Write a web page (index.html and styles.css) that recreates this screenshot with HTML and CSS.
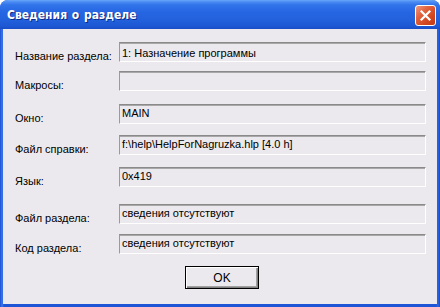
FILE: index.html
```html
<!DOCTYPE html>
<html lang="ru">
<head>
<meta charset="utf-8">
<title>Сведения о разделе</title>
<link rel="stylesheet" href="styles.css">
</head>
<body>
<div class="window">
  <div class="titlebar">
    <span class="title">Сведения о разделе</span>
    <button class="close" aria-label="Закрыть">
      <svg width="11" height="11" viewBox="0 0 11 11"><path d="M1.5 1.5 L9.5 9.5 M9.5 1.5 L1.5 9.5" stroke="#fff" stroke-width="2.2" stroke-linecap="square"/></svg>
    </button>
  </div>
  <div class="client">
    <div class="row first">
      <span class="label">Название раздела:</span>
      <div class="field field-first">1: Назначение программы</div>
    </div>
    <div class="row g9">
      <span class="label">Макросы:</span>
      <div class="field"></div>
    </div>
    <div class="row g13">
      <span class="label">Окно:</span>
      <div class="field">MAIN</div>
    </div>
    <div class="row g11">
      <span class="label">Файл справки:</span>
      <div class="field">f:\help\HelpForNagruzka.hlp [4.0 h]</div>
    </div>
    <div class="row g12">
      <span class="label">Язык:</span>
      <div class="field">0x419</div>
    </div>
    <div class="row g17">
      <span class="label">Файл раздела:</span>
      <div class="field">сведения отсутствуют</div>
    </div>
    <div class="row g10">
      <span class="label">Код раздела:</span>
      <div class="field">сведения отсутствуют</div>
    </div>
    <div class="buttons">
      <button class="ok">OK</button>
    </div>
  </div>
</div>
</body>
</html>
```
FILE: styles.css
```css
html, body {
  margin: 0;
  padding: 0;
  background: #ffffff;
}
.window {
  width: 440px;
  height: 307px;
  box-sizing: border-box;
  background: linear-gradient(to right, #1e4fd0 0, #3a76ee 2px, #1e55d6 4px, #1e55d6 436px, #2d66e4 438px, #1a47c0 440px);
  border-radius: 8px 8px 0 0;
  display: flex;
  flex-direction: column;
  font-family: "Liberation Sans", Arial, sans-serif;
  font-size: 11px;
  color: #000;
}
.titlebar {
  height: 29px;
  flex: none;
  display: flex;
  align-items: center;
  justify-content: space-between;
  padding: 0 4px 0 7px;
  border-radius: 8px 8px 0 0;
  background: linear-gradient(to bottom, #6aa6f8 0px, #4a8af2 2px, #3074ea 5px, #2766e2 12px, #2260dc 20px, #1e58d4 26px, #1a4cc6 29px);
}
.title {
  color: #fff;
  font-family: "DejaVu Sans Condensed", "Liberation Sans Narrow", "Liberation Sans", sans-serif;
  font-stretch: condensed;
  font-weight: bold;
  font-size: 12px;
  letter-spacing: 0;
  word-spacing: 1px;
  text-shadow: 1px 1px 0 #0c2a8a;
  padding-top: 1px;
}
.close {
  width: 21px;
  height: 21px;
  margin-top: 1px;
  padding: 0;
  border: 1px solid #fff;
  border-radius: 3px;
  background: linear-gradient(135deg, #ee9a80 0%, #e2623f 35%, #d2461f 70%, #c23a18 100%);
  display: flex;
  align-items: center;
  justify-content: center;
}
.client {
  flex: 1;
  margin: 0 3px 3px 3px;
  background: #ebe9ed;
  padding: 13px 0 0 12px;
  display: flex;
  flex-direction: column;
}
.row {
  display: flex;
  height: 20px;
}
.g9 { margin-top: 9px; }
.g10 { margin-top: 10px; }
.g11 { margin-top: 11px; }
.g12 { margin-top: 12px; }
.g13 { margin-top: 13px; }
.g17 { margin-top: 17px; }
.label {
  width: 104px;
  flex: none;
  line-height: 13px;
  padding-top: 8px;
  white-space: nowrap;
}
.field {
  width: 307px;
  height: 20px;
  box-sizing: border-box;
  border-top: 1px solid #8a8a8a;
  border-left: 1px solid #9a9a9a;
  border-right: 1px solid #fff;
  border-bottom: 1px solid #fff;
  box-shadow: inset 0 1px 0 #a8a8a8;
  padding: 2px 0 0 2px;
  line-height: 13px;
  white-space: nowrap;
  overflow: hidden;
}
.field-first {
  padding-top: 4px;
}
.buttons {
  display: flex;
  justify-content: center;
  margin-top: 12px;
  padding-right: 12px;
}
.ok {
  width: 74px;
  height: 23px;
  box-sizing: border-box;
  border: 1px solid #000;
  background: #ebe9ed;
  box-shadow: inset 1px 1px 0 #fff, inset -1px -1px 0 #808080, inset -2px -2px 0 #a0a0a0;
  font-family: "Liberation Sans", Arial, sans-serif;
  font-size: 12px;
  color: #000;
  padding: 0;
  margin-left: 4px;
}
```
